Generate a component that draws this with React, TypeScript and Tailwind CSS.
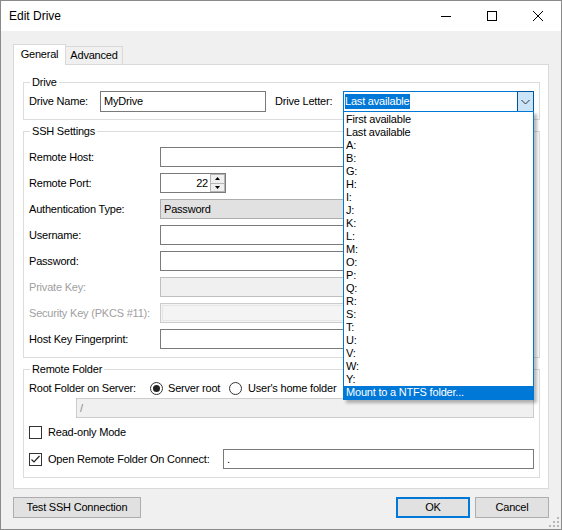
import React from "react";

function Group({ title, className, children }: { title: string; className: string; children: React.ReactNode }) {
  return (
    <div className={"relative w-[517px] border border-[#dcdcdc] " + className}>
      <span className="absolute left-[6px] top-[-7px] h-[13px] bg-white px-[2px] leading-[13px]">{title}</span>
      {children}
    </div>
  );
}

function Row({ label, gray, children }: { label: string; gray?: boolean; children: React.ReactNode }) {
  return (
    <div className="flex h-[20px] items-center">
      <span className={gray ? "w-[131px] text-[#a0a0a0]" : "w-[131px]"}>{label}</span>
      {children}
    </div>
  );
}

function Box({ w, children }: { w: string; children?: React.ReactNode }) {
  return <div className={"flex h-[20px] items-center border border-[#7a7a7a] bg-white pl-[3px] " + w}>{children}</div>;
}

function Check({ checked }: { checked?: boolean }) {
  return (
    <div className="flex h-[13px] w-[13px] shrink-0 items-center justify-center border border-[#333333] bg-white">
      {checked && (
        <svg width="11" height="11" viewBox="0 0 11 11">
          <polyline points="1.5,5.5 4,8 9.5,2" fill="none" stroke="#222" strokeWidth="1.2" />
        </svg>
      )}
    </div>
  );
}

function Radio({ checked }: { checked?: boolean }) {
  return (
    <div className="flex h-[13px] w-[13px] shrink-0 items-center justify-center rounded-full border border-[#333333] bg-white">
      {checked && <div className="h-[7px] w-[7px] rounded-full bg-[#222222]" />}
    </div>
  );
}

export default function App() {
  const items = [
    "First available",
    "Last available",
    "A:",
    "B:",
    "G:",
    "H:",
    "I:",
    "J:",
    "K:",
    "L:",
    "M:",
    "O:",
    "P:",
    "Q:",
    "R:",
    "S:",
    "T:",
    "U:",
    "V:",
    "W:",
    "Y:",
  ];
  return (
    <div className="h-[530px] w-[562px] overflow-hidden font-['Liberation_Sans',Arial,sans-serif] text-[11px] leading-[13px] tracking-[-0.2px] text-black">
      <div className="relative flex h-[530px] w-[562px] flex-col border border-[#8a8a8a] bg-[#f0f0f0]">
        {/* Title bar */}
        <div className="flex h-[30px] shrink-0 items-stretch bg-white">
          <div className="flex flex-1 items-center pl-[8px] pt-[1px] text-[12px] tracking-normal">Edit Drive</div>
          <div className="flex w-[46px] items-center justify-center">
            <svg width="10" height="10" viewBox="0 0 10 10">
              <line x1="0" y1="5.5" x2="10" y2="5.5" stroke="#000" strokeWidth="1" />
            </svg>
          </div>
          <div className="flex w-[46px] items-center justify-center">
            <svg width="10" height="10" viewBox="0 0 10 10">
              <rect x="0.5" y="0.5" width="9" height="9" fill="none" stroke="#000" strokeWidth="1" />
            </svg>
          </div>
          <div className="flex w-[46px] items-center justify-center">
            <svg width="10" height="10" viewBox="0 0 10 10">
              <line x1="0" y1="0" x2="10" y2="10" stroke="#000" strokeWidth="1" />
              <line x1="10" y1="0" x2="0" y2="10" stroke="#000" strokeWidth="1" />
            </svg>
          </div>
        </div>

        <div className="flex flex-col px-[12px]">
          {/* Tabs */}
          <div className="mt-[13px] flex h-[20px] items-end">
            <div className="relative z-10 -mb-px flex h-[21px] w-[53px] items-center justify-center border-l border-r border-t border-[#d9d9d9] bg-white pb-[1px]">
              General
            </div>
            <div className="flex h-[18px] w-[57px] items-center justify-center border-r border-t border-[#d9d9d9]">
              Advanced
            </div>
          </div>

          {/* Tab page */}
          <div className="flex h-[425px] w-[536px] flex-col border border-[#d9d9d9] bg-white pl-[9px] pt-[17px]">
            <Group title="Drive" className="pb-[7px] pl-[5px] pt-[8px]">
              <div className="flex h-[21px] items-center">
                <span className="w-[71px]">Drive Name:</span>
                <div className="flex h-[21px] w-[166px] items-center border border-[#7a7a7a] pl-[3px]">MyDrive</div>
                <span className="ml-[9px] w-[68px]">Drive Letter:</span>
                <div className="relative z-20 flex h-[21px] w-[191px]">
                  <div className="flex flex-1 items-center border-b border-l border-t border-[#0078d7] pl-[1px]">
                    <span className="flex h-[15px] items-center bg-[#0078d7] pr-[1px] text-white">Last available</span>
                  </div>
                  <div className="flex h-[21px] w-[17px] items-center justify-center border border-[#005499] bg-[#cce4f7]">
                    <svg width="9" height="6" viewBox="0 0 9 6">
                      <polyline points="0.5,1 4.5,5 8.5,1" fill="none" stroke="#333" strokeWidth="1" />
                    </svg>
                  </div>
                  {/* Dropdown list */}
                  <div className="absolute left-0 top-[20px] flex w-[191px] flex-col border border-[#0078d7] bg-white pt-[1px] shadow-[3px_3px_3px_rgba(0,0,0,0.28)]">
                    {items.map((t) => (
                      <div key={t} className="h-[13px] pl-[2px] leading-[13px]">
                        {t}
                      </div>
                    ))}
                    <div className="h-[13px] bg-[#0078d7] pl-[2px] leading-[13px] text-white">Mount to a NTFS folder...</div>
                  </div>
                </div>
              </div>
            </Group>

            <Group title="SSH Settings" className="mt-[11px] flex flex-col gap-[6px] pb-[8px] pl-[5px] pt-[15px]">
              <Row label="Remote Host:">
                <Box w="w-[374px]" />
              </Row>
              <Row label="Remote Port:">
                <div className="flex h-[20px] w-[66px] border border-[#7a7a7a] bg-white">
                  <div className="flex flex-1 items-center justify-end pr-[2px]">22</div>
                  <div className="flex w-[15px] flex-col">
                    <div className="flex flex-1 items-center justify-center border border-[#b5b5b5] bg-[#f0f0f0]">
                      <svg width="5" height="3" viewBox="0 0 5 3">
                        <polygon points="0,3 2.5,0 5,3" fill="#000" />
                      </svg>
                    </div>
                    <div className="flex flex-1 items-center justify-center border border-t-0 border-[#b5b5b5] bg-[#f0f0f0]">
                      <svg width="5" height="3" viewBox="0 0 5 3">
                        <polygon points="0,0 5,0 2.5,3" fill="#000" />
                      </svg>
                    </div>
                  </div>
                </div>
              </Row>
              <Row label="Authentication Type:">
                <div className="flex h-[20px] w-[374px] items-center border border-[#adadad] bg-[#e1e1e1] pl-[3px]">Password</div>
              </Row>
              <Row label="Username:">
                <Box w="w-[374px]" />
              </Row>
              <Row label="Password:">
                <Box w="w-[374px]" />
              </Row>
              <Row label="Private Key:" gray>
                <div className="h-[20px] w-[374px] border border-[#bfbfbf] bg-[#f0f0f0]" />
              </Row>
              <Row label="Security Key (PKCS #11):" gray>
                <div className="h-[20px] w-[374px] border border-[#cccccc] bg-[#f4f4f4] p-px">
                  <div className="h-full w-full border border-[#e6e6e6]" />
                </div>
              </Row>
              <Row label="Host Key Fingerprint:">
                <Box w="w-[374px]" />
              </Row>
            </Group>

            <Group title="Remote Folder" className="mt-[11px] flex flex-col pb-[8px] pl-[5px] pt-[12px]">
              <div className="flex h-[13px] items-center">
                <span className="w-[121px]">Root Folder on Server:</span>
                <div className="flex w-[79px] items-center gap-[5px]">
                  <Radio checked />
                  <span>Server root</span>
                </div>
                <div className="flex items-center gap-[6px]">
                  <Radio />
                  <span>User's home folder</span>
                </div>
              </div>
              <div className="ml-[47px] mt-[3px] flex h-[20px] w-[458px] items-center border border-[#cccccc] bg-[#f0f0f0] pl-[3px] text-[#8a8a8a]">
                /
              </div>
              <div className="mt-[8px] flex h-[13px] items-center gap-[6px]">
                <Check />
                <span>Read-only Mode</span>
              </div>
              <div className="mt-[10px] flex h-[20px] items-center">
                <Check checked />
                <span className="ml-[6px] w-[175px]">Open Remote Folder On Connect:</span>
                <div className="flex h-[20px] w-[311px] items-center border border-[#7a7a7a] bg-white pl-[3px]">.</div>
              </div>
            </Group>
          </div>

          {/* Buttons */}
          <div className="mt-[8px] flex h-[21px] items-center">
            <div className="flex h-[21px] w-[128px] items-center justify-center border border-[#adadad] bg-[#e1e1e1]">
              Test SSH Connection
            </div>
            <div className="flex-1" />
            <div className="flex h-[21px] w-[74px] items-center justify-center border-2 border-[#0078d7] bg-[#e1e1e1]">OK</div>
            <div className="ml-[5px] flex h-[21px] w-[74px] items-center justify-center border border-[#adadad] bg-[#e1e1e1]">
              Cancel
            </div>
          </div>
        </div>

        {/* Resize grip */}
        <div className="absolute bottom-[2px] right-[2px]">
          <svg width="10" height="10" viewBox="0 0 10 10">
            <rect x="8" y="0" width="2" height="2" fill="#b8b8b8" />
            <rect x="4" y="4" width="2" height="2" fill="#b8b8b8" />
            <rect x="8" y="4" width="2" height="2" fill="#b8b8b8" />
            <rect x="0" y="8" width="2" height="2" fill="#b8b8b8" />
            <rect x="4" y="8" width="2" height="2" fill="#b8b8b8" />
            <rect x="8" y="8" width="2" height="2" fill="#b8b8b8" />
          </svg>
        </div>
      </div>
    </div>
  );
}
